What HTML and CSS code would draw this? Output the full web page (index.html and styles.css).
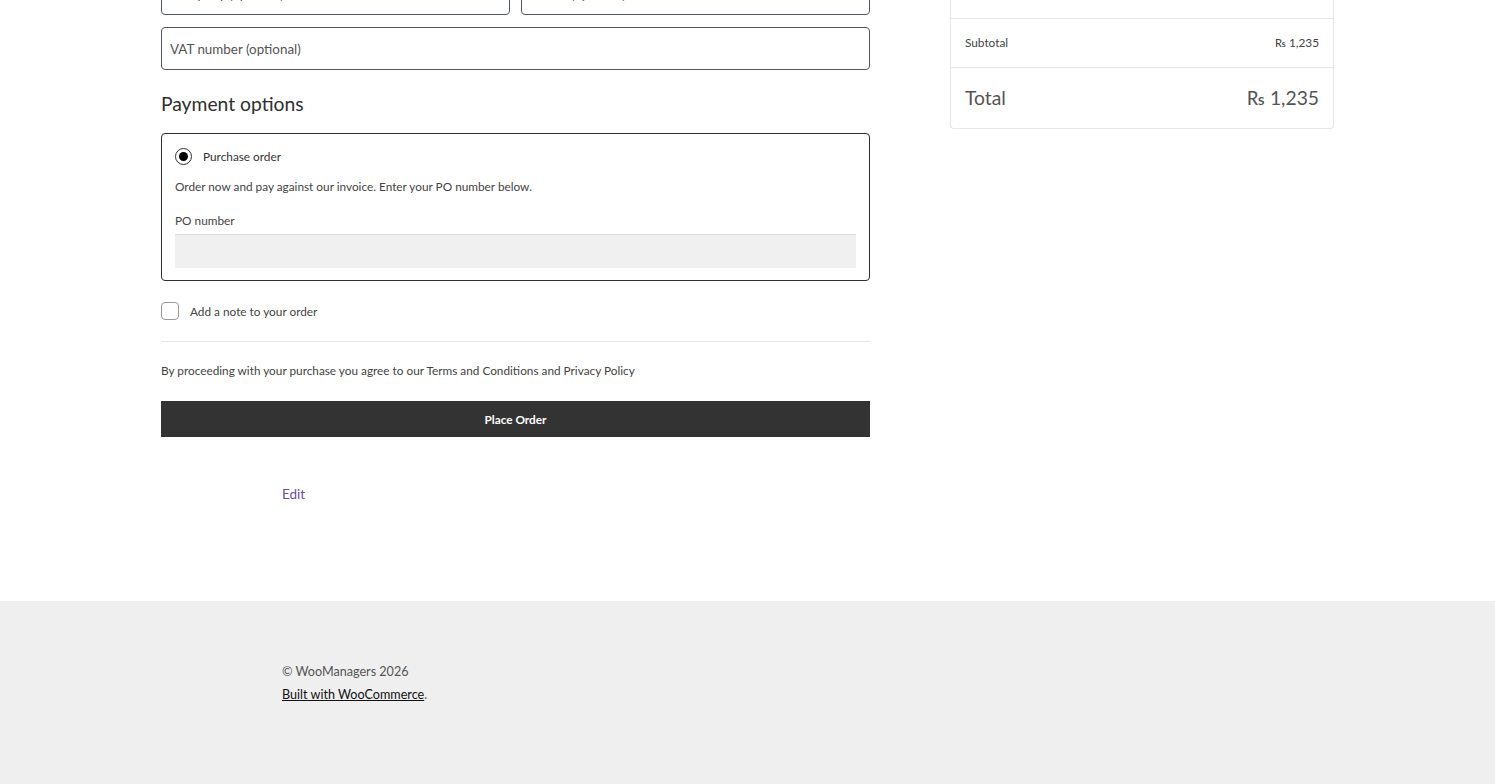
FILE: index.html
```html
<!DOCTYPE html>
<html lang="en">
<head>
  <meta charset="UTF-8" />
  <meta name="viewport" content="width=device-width, initial-scale=1" />
  <title>Checkout – WooManagers</title>
  <link rel="stylesheet" href="styles.css">
</head>
<body>
  <main class="site-main">
    <div class="checkout">
      <form class="checkout-form">
        <div class="field-row">
          <div class="text-input"><span class="placeholder">Company (optional)</span></div>
          <div class="text-input"><span class="placeholder">Phone (optional)</span></div>
        </div>
        <div class="text-input"><span class="placeholder">VAT number (optional)</span></div>

        <h2 class="section-title">Payment options</h2>
        <div class="payment-box">
          <label class="radio-row">
            <span class="radio"><span class="radio-dot"></span></span>
            <span>Purchase order</span>
          </label>
          <p class="payment-desc">Order now and pay against our invoice. Enter your PO number below.</p>
          <label class="po-label">PO number</label>
          <div class="po-input"></div>
        </div>

        <label class="note-row">
          <span class="checkbox"></span>
          <span>Add a note to your order</span>
        </label>

        <hr class="divider">

        <p class="terms">By proceeding with your purchase you agree to our Terms and Conditions and Privacy Policy</p>

        <button type="button" class="place-order">Place Order</button>
      </form>

      <aside class="summary">
        <div class="summary-row summary-row--cut">
          <span>Shipping</span>
          <span>Free</span>
        </div>
        <div class="summary-row">
          <span>Subtotal</span>
          <span>&#8360; 1,235</span>
        </div>
        <div class="summary-row summary-total">
          <span>Total</span>
          <span>&#8360; 1,235</span>
        </div>
      </aside>
    </div>

    <div class="post-edit">
      <a href="#" class="edit-link">Edit</a>
    </div>
  </main>

  <footer class="site-footer">
    <div class="footer-inner">
      <p>&copy; WooManagers 2026</p>
      <p><a href="#" class="footer-link">Built with WooCommerce</a>.</p>
    </div>
  </footer>
</body>
</html>
```

FILE: styles.css
```css
body {
  margin: 0;
  font-family: Lato, "Open Sans", sans-serif;
  color: #2f2f2f;
  background: #fff;
  overflow: hidden;
}

p {
  margin: 0;
}

/* page is shown scrolled down, so the first fields are cut off */
.site-main {
  margin-top: -28px;
  padding-bottom: 99px;
}

.checkout {
  width: 1173px;
  margin: 0 auto;
  display: flex;
  gap: 80px;
  align-items: flex-start;
}

.checkout-form {
  width: 709px;
  display: flex;
  flex-direction: column;
}

.field-row {
  display: flex;
  gap: 11px;
  margin-bottom: 12px;
}

.field-row .text-input {
  flex: 1;
}

.text-input {
  box-sizing: border-box;
  height: 43px;
  border: 1px solid #50575e;
  border-radius: 4px;
  padding: 0 8px;
  display: flex;
  align-items: center;
}

.placeholder {
  font-size: 13.4px;
  color: #555;
}

.section-title {
  font-size: 19.3px;
  font-weight: 400;
  margin: 22px 0 17px;
  line-height: 24px;
  color: #2f2f2f;
}

.payment-box {
  border: 1px solid #2f2f2f;
  border-radius: 4px;
  padding: 14px 13px 12px;
}

.radio-row {
  display: flex;
  align-items: center;
  gap: 11px;
  font-size: 11.8px;
  color: #333;
}

.radio {
  box-sizing: border-box;
  width: 17px;
  height: 17px;
  border: 1px solid #2f2f2f;
  border-radius: 50%;
  display: flex;
  align-items: center;
  justify-content: center;
}

.radio-dot {
  width: 9px;
  height: 9px;
  border-radius: 50%;
  background: #000;
}

.payment-desc {
  font-size: 11.8px;
  color: #444;
  margin-top: 13px;
  line-height: 18px;
}

.po-label {
  display: block;
  font-size: 11.8px;
  color: #444;
  margin-top: 16px;
  line-height: 18px;
}

.po-input {
  height: 33px;
  margin-top: 4px;
  background: #f0f0f0;
  border-top: 1px solid #ddd;
}

.note-row {
  display: flex;
  align-items: center;
  gap: 11px;
  margin-top: 21px;
  font-size: 11.8px;
  color: #444;
}

.checkbox {
  box-sizing: border-box;
  width: 18px;
  height: 18px;
  border: 1px solid #999;
  border-radius: 4px;
}

.divider {
  width: 100%;
  border: 0;
  border-top: 1px solid #e6e6e6;
  margin: 21px 0 0;
}

.terms {
  font-size: 11.8px;
  color: #444;
  margin-top: 20px;
  line-height: 18px;
}

.place-order {
  margin-top: 21px;
  height: 36px;
  border: 0;
  background: #333;
  color: #fff;
  font-family: inherit;
  font-size: 11.8px;
  font-weight: 700;
  cursor: pointer;
}

/* order summary */
.summary {
  width: 384px;
  box-sizing: border-box;
  border: 1px solid #e6e6e6;
  border-top: 0;
  border-radius: 0 0 4px 4px;
  margin-top: -10px;
}

.summary-row {
  display: flex;
  justify-content: space-between;
  align-items: center;
  padding: 0 14px 2px;
  height: 49px;
  box-sizing: border-box;
  font-size: 11.8px;
  color: #444;
  border-bottom: 1px solid #e6e6e6;
}

.summary-row--cut {
  height: 57px;
}

.summary-total {
  height: 60px;
  border-bottom: 0;
  font-size: 19.3px;
  color: #555;
  padding-bottom: 2px;
}

.post-edit {
  width: 931px;
  margin: 46px auto 0;
}

.edit-link {
  color: #6a4ca5;
  text-decoration: none;
  font-size: 13.5px;
}

/* footer */
.site-footer {
  background: #efefef;
  height: 200px;
}

.footer-inner {
  width: 931px;
  margin: 0 auto;
  padding-top: 59px;
  font-size: 12.6px;
  color: #555;
  line-height: 23px;
}

.footer-link {
  color: #111;
  text-decoration: underline;
}
```
